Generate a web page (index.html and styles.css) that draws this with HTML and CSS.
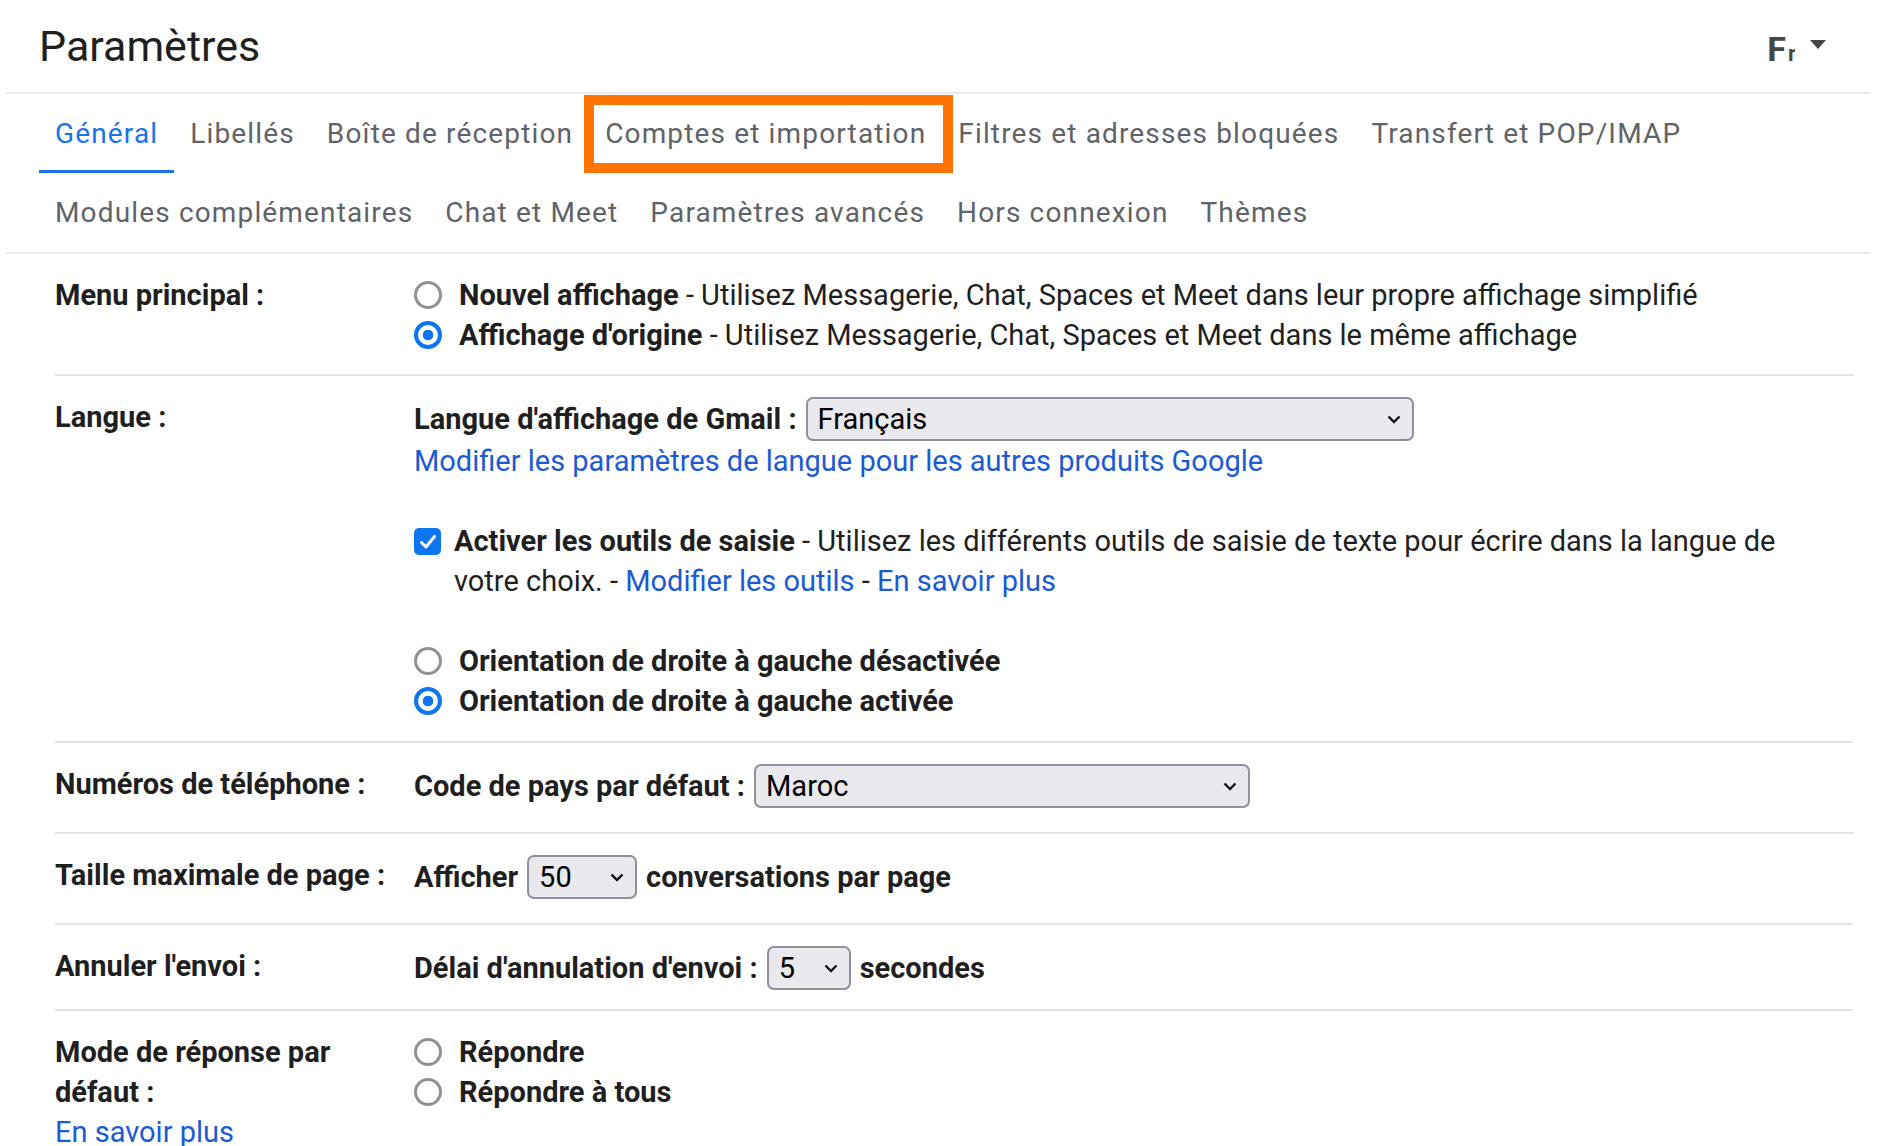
FILE: index.html
```html
<!DOCTYPE html>
<html lang="fr">
  <head>
    <meta charset="UTF-8" />
    <meta name="viewport" content="width=device-width, initial-scale=1.0" />
    <title>Paramètres</title>
    <link rel="stylesheet" href="styles.css">
  </head>
  <body>
    <div class="page">
      <header class="header">
        <h1 class="title">Paramètres</h1>
        <div class="input-tools">
          <span class="tools-f">F</span><span class="tools-r">r</span>
          <span class="caret"></span>
        </div>
      </header>

      <nav class="tabs">
        <a class="tab active">Général</a>
        <a class="tab">Libellés</a>
        <a class="tab">Boîte de réception</a>
        <a class="tab highlight">Comptes et importation</a>
        <a class="tab">Filtres et adresses bloquées</a>
        <a class="tab">Transfert et POP/IMAP</a>
        <a class="tab">Modules complémentaires</a>
        <a class="tab">Chat et Meet</a>
        <a class="tab">Paramètres avancés</a>
        <a class="tab">Hors connexion</a>
        <a class="tab">Thèmes</a>
      </nav>

      <div class="settings">
        <!-- Menu principal -->
        <div class="row first">
          <div class="label">Menu principal :</div>
          <div class="control">
            <div class="option">
              <span class="radio"></span>
              <span><b>Nouvel affichage</b> - Utilisez Messagerie, Chat, Spaces et Meet dans leur propre affichage simplifié</span>
            </div>
            <div class="option">
              <span class="radio checked"></span>
              <span><b>Affichage d'origine</b> - Utilisez Messagerie, Chat, Spaces et Meet dans le même affichage</span>
            </div>
          </div>
        </div>

        <!-- Langue -->
        <div class="row">
          <div class="label">Langue :</div>
          <div class="control">
            <div class="field">
              <b>Langue d'affichage de Gmail :</b>
              <div class="select select-lang">
                <span>Français</span>
                <svg class="chevron" width="14" height="9" viewBox="0 0 14 9"><path d="M1.5 1.5l5.5 5.5 5.5-5.5" fill="none" stroke="#111" stroke-width="2.4"/></svg>
              </div>
            </div>
            <div class="line"><a class="link">Modifier les paramètres de langue pour les autres produits Google</a></div>

            <div class="check-para">
              <span class="checkbox">
                <svg width="18" height="16" viewBox="0 0 18 16"><path d="M2.5 8.5l4.5 4.5 8.5-10.5" fill="none" stroke="#fff" stroke-width="3" stroke-linecap="round" stroke-linejoin="round"/></svg>
              </span>
              <p><b>Activer les outils de saisie</b> - Utilisez les différents outils de saisie de texte pour écrire dans la langue de votre choix. - <a class="link">Modifier les outils</a> - <a class="link">En savoir plus</a></p>
            </div>

            <div class="group">
              <div class="option">
                <span class="radio"></span>
                <b>Orientation de droite à gauche désactivée</b>
              </div>
              <div class="option">
                <span class="radio checked"></span>
                <b>Orientation de droite à gauche activée</b>
              </div>
            </div>
          </div>
        </div>

        <!-- Numéros de téléphone -->
        <div class="row select-row">
          <div class="label">Numéros de téléphone :</div>
          <div class="control">
            <div class="field">
              <b>Code de pays par défaut :</b>
              <div class="select select-country">
                <span>Maroc</span>
                <svg class="chevron" width="14" height="9" viewBox="0 0 14 9"><path d="M1.5 1.5l5.5 5.5 5.5-5.5" fill="none" stroke="#111" stroke-width="2.4"/></svg>
              </div>
            </div>
          </div>
        </div>

        <!-- Taille maximale de page -->
        <div class="row select-row">
          <div class="label">Taille maximale de page :</div>
          <div class="control">
            <div class="field">
              <b>Afficher</b>
              <div class="select select-page">
                <span>50</span>
                <svg class="chevron" width="14" height="9" viewBox="0 0 14 9"><path d="M1.5 1.5l5.5 5.5 5.5-5.5" fill="none" stroke="#111" stroke-width="2.4"/></svg>
              </div>
              <b>conversations par page</b>
            </div>
          </div>
        </div>

        <!-- Annuler l'envoi -->
        <div class="row select-row compact">
          <div class="label">Annuler l'envoi :</div>
          <div class="control">
            <div class="field">
              <b>Délai d'annulation d'envoi :</b>
              <div class="select select-undo">
                <span>5</span>
                <svg class="chevron" width="14" height="9" viewBox="0 0 14 9"><path d="M1.5 1.5l5.5 5.5 5.5-5.5" fill="none" stroke="#111" stroke-width="2.4"/></svg>
              </div>
              <b>secondes</b>
            </div>
          </div>
        </div>

        <!-- Mode de réponse -->
        <div class="row last">
          <div class="label">
            Mode de réponse par défaut :
            <a class="link label-link">En savoir plus</a>
          </div>
          <div class="control">
            <div class="option">
              <span class="radio"></span>
              <b>Répondre</b>
            </div>
            <div class="option">
              <span class="radio"></span>
              <b>Répondre à tous</b>
            </div>
          </div>
        </div>
      </div>
    </div>
  </body>
</html>
```

FILE: styles.css
```css
* {
  box-sizing: border-box;
}
html,
body {
  height: 100%;
}
body {
  margin: 0;
  overflow: hidden;
  background-color: #ffffff;
  color: #1f1f1f;
  font-family: Roboto, "Liberation Sans", Arial, sans-serif;
  font-size: 29px;
  line-height: 40px;
}
.page {
  margin: 0 32px 0 6px;
}

/* header */
.header {
  display: flex;
  align-items: center;
  justify-content: space-between;
  height: 94px;
  padding: 0 44px 0 33px;
  border-bottom: 2px solid #ebebeb;
}
.title {
  margin: 0;
  font-size: 43px;
  font-weight: 400;
  line-height: 50px;
  color: #1f1f1f;
}
.input-tools {
  display: flex;
  align-items: baseline;
  margin-top: 6px;
  color: #444746;
  font-weight: 700;
}
.tools-f {
  font-size: 34px;
  line-height: 34px;
}
.tools-r {
  display: inline-block;
  width: 7px;
  overflow: hidden;
  margin-left: 2px;
  font-size: 22px;
  line-height: 22px;
}
.caret {
  align-self: center;
  width: 0;
  height: 0;
  margin-left: 15px;
  margin-top: -10px;
  border-left: 8px solid transparent;
  border-right: 8px solid transparent;
  border-top: 9px solid #444746;
}

/* tabs */
.tabs {
  display: flex;
  flex-wrap: wrap;
  padding-left: 33px;
  border-bottom: 2px solid #ebebeb;
}
.tab {
  position: relative;
  display: flex;
  align-items: center;
  height: 79px;
  padding: 0 16px;
  font-size: 28px;
  letter-spacing: 1.15px;
  color: #5f6368;
  cursor: pointer;
}
.tab.active {
  color: #1a73e8;
  box-shadow: inset 0 -3px 0 #1a73e8;
}
.tab.highlight::after {
  content: "";
  position: absolute;
  top: 1px;
  bottom: 0;
  left: -5px;
  right: -11px;
  border: 10px solid #ff7300;
}

/* settings rows */
.settings {
  margin: 0 17px 0 49px;
}
.row {
  display: grid;
  grid-template-columns: 359px 1fr;
  padding: 21px 0 20px;
  border-bottom: 2px solid #e3e3e3;
}
.row.first {
  padding-bottom: 19px;
}
.row.select-row {
  padding-bottom: 24px;
}
.row.select-row.compact {
  padding-bottom: 19px;
}
.row.last {
  border-bottom: none;
}
.label {
  font-weight: 700;
  padding-right: 10px;
}
.label-link {
  display: block;
  font-weight: 400;
}
.control {
  padding-right: 50px;
}
.link {
  color: #1a5bd2;
  cursor: pointer;
}
.line {
  height: 40px;
}
.option {
  display: flex;
  align-items: center;
  height: 40px;
  white-space: nowrap;
}
.radio {
  flex: none;
  width: 28px;
  height: 28px;
  margin-right: 17px;
  border: 3px solid #909096;
  border-radius: 50%;
  background-color: #ffffff;
}
.radio.checked {
  border: 4px solid #0b75f2;
  background: radial-gradient(circle, #0b75f2 0 5px, #ffffff 5.6px);
}
.check-para {
  display: flex;
  align-items: flex-start;
  margin-top: 40px;
}
.check-para p {
  margin: 0;
}
.checkbox {
  flex: none;
  display: flex;
  align-items: center;
  justify-content: center;
  width: 27px;
  height: 27px;
  margin: 7px 13px 0 0;
  border-radius: 5px;
  background-color: #0b75f2;
}
.group {
  margin-top: 40px;
}

/* select boxes */
.field {
  display: flex;
  align-items: center;
  gap: 9px;
  white-space: nowrap;
}
.select {
  display: flex;
  align-items: center;
  justify-content: space-between;
  height: 44px;
  padding: 0 11px 0 10px;
  border: 2px solid #8f8f9d;
  border-radius: 7px;
  background-color: #e9e9ed;
  color: #000000;
}
.select-lang {
  width: 608px;
}
.select-country {
  width: 496px;
}
.select-page {
  width: 110px;
}
.select-undo {
  width: 84px;
}
.chevron {
  flex: none;
}
```
